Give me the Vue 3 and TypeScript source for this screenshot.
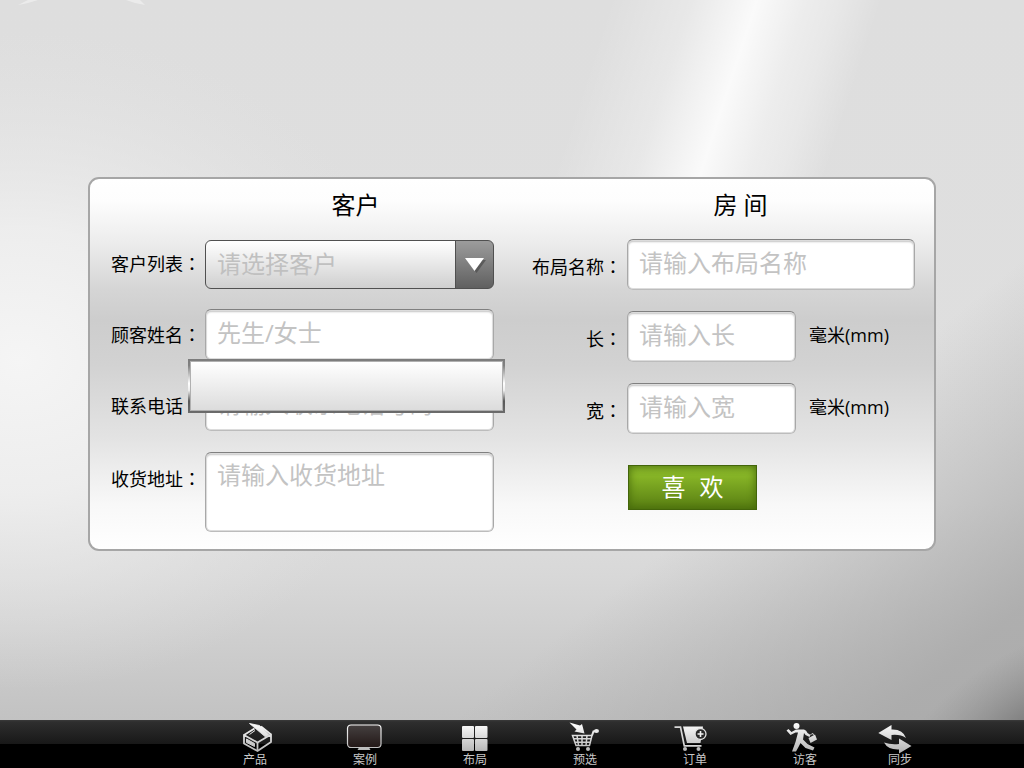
<script setup lang="ts">
import { ref } from 'vue'

interface NavItem {
  id: string
  label: string
}

const navItems: NavItem[] = [
  { id: 'product', label: '产品' },
  { id: 'case', label: '案例' },
  { id: 'layout', label: '布局' },
  { id: 'preselect', label: '预选' },
  { id: 'order', label: '订单' },
  { id: 'visitor', label: '访客' },
  { id: 'sync', label: '同步' },
]

const customer = ref('')
const name = ref('')
const phone = ref('')
const address = ref('')
const layoutName = ref('')
const roomLength = ref('')
const roomWidth = ref('')
</script>

<template>
  <div class="page">
    <svg class="backdrop" viewBox="0 0 1024 720" preserveAspectRatio="none" aria-hidden="true">
      <defs>
        <linearGradient id="bg-base" x1="0" y1="0" x2="0" y2="1">
          <stop offset="0" stop-color="#dedede" />
          <stop offset="0.7" stop-color="#dfdfdf" />
          <stop offset="0.8" stop-color="#d8d8d8" />
          <stop offset="1" stop-color="#c2c2c2" />
        </linearGradient>
        <radialGradient id="bg-left" gradientUnits="userSpaceOnUse" cx="0" cy="0" r="1" gradientTransform="translate(20 360) scale(400 330)">
          <stop offset="0" stop-color="#f5f5f5" />
          <stop offset="0.4" stop-color="#f1f1f1" stop-opacity="0.8" />
          <stop offset="1" stop-color="#e4e4e4" stop-opacity="0" />
        </radialGradient>
        <linearGradient id="bg-streak" gradientUnits="userSpaceOnUse" x1="624" y1="-43" x2="870" y2="37">
          <stop offset="0" stop-color="#fff" stop-opacity="0" />
          <stop offset="0.3" stop-color="#fff" stop-opacity="0.3" />
          <stop offset="0.54" stop-color="#fff" stop-opacity="0.85" />
          <stop offset="0.72" stop-color="#fff" stop-opacity="0.45" />
          <stop offset="0.84" stop-color="#fff" stop-opacity="0.3" />
          <stop offset="1" stop-color="#fff" stop-opacity="0" />
        </linearGradient>
        <linearGradient id="bg-shade" gradientUnits="userSpaceOnUse" x1="800" y1="440" x2="970" y2="650">
          <stop offset="0" stop-color="#aaa" stop-opacity="0" />
          <stop offset="1" stop-color="#a8a8a8" stop-opacity="0.85" />
        </linearGradient>
        <radialGradient id="bg-corner" gradientUnits="userSpaceOnUse" cx="0" cy="0" r="1" gradientTransform="translate(1034 730) rotate(-32) scale(170 80)">
          <stop offset="0" stop-color="#747474" />
          <stop offset="1" stop-color="#8c8c8c" stop-opacity="0" />
        </radialGradient>
      </defs>
      <rect width="1024" height="720" fill="url(#bg-base)" />
      <rect width="1024" height="720" fill="url(#bg-left)" />
      <rect width="1024" height="300" fill="url(#bg-streak)" />
      <rect width="1024" height="720" fill="url(#bg-shade)" />
      <rect width="1024" height="720" fill="url(#bg-corner)" />
      <path d="M18 5 Q26 4 38 0 H28 Z M126 0 Q136 4 145 5 L140 0 Z" fill="#fff" opacity="0.4" />
    </svg>

    <main class="content">
      <form class="panel" @submit.prevent>
        <section class="column column-customer">
          <h2 class="heading">客户</h2>
          <div class="row">
            <label class="label" for="customer">客户列表<span class="colon">：</span></label>
            <div class="field picker">
              <select id="customer" v-model="customer" class="select">
                <option value="">请选择客户</option>
              </select>
              <svg class="picker-arrow" viewBox="0 0 22 16" aria-hidden="true">
                <path d="M3 3 H22 L12.500 16 Z" fill="#4c4c4c" opacity="0.7" />
                <path d="M1 1 H20 L10.500 14 Z" fill="#fff" />
              </svg>
            </div>
          </div>
          <div class="row">
            <label class="label" for="name">顾客姓名<span class="colon">：</span></label>
            <div class="field">
              <input id="name" v-model="name" class="input" type="text" placeholder="先生/女士" />
              <div class="popup" role="listbox" aria-label="客户列表">
                <div class="popup-body"></div>
              </div>
            </div>
          </div>
          <div class="row">
            <label class="label" for="phone">联系电话<span class="colon">：</span></label>
            <div class="field">
              <input id="phone" v-model="phone" class="input" type="tel" placeholder="请输入联系电话号码" />
            </div>
          </div>
          <div class="row row-top">
            <label class="label" for="address">收货地址<span class="colon">：</span></label>
            <div class="field">
              <textarea id="address" v-model="address" class="input textarea" placeholder="请输入收货地址"></textarea>
            </div>
          </div>
        </section>

        <section class="column column-room">
          <h2 class="heading">房 间</h2>
          <div class="row">
            <label class="label" for="layout-name">布局名称<span class="colon">：</span></label>
            <div class="field">
              <input id="layout-name" v-model="layoutName" class="input" type="text" placeholder="请输入布局名称" />
            </div>
          </div>
          <div class="row">
            <label class="label" for="room-length">长<span class="colon">：</span></label>
            <div class="field measure">
              <input id="room-length" v-model="roomLength" class="input short" type="text" placeholder="请输入长" />
              <span class="unit">毫米(mm)</span>
            </div>
          </div>
          <div class="row">
            <label class="label" for="room-width">宽<span class="colon">：</span></label>
            <div class="field measure">
              <input id="room-width" v-model="roomWidth" class="input short" type="text" placeholder="请输入宽" />
              <span class="unit">毫米(mm)</span>
            </div>
          </div>
          <div class="actions">
            <button class="like" type="submit"><span>喜</span><span>欢</span></button>
          </div>
        </section>
      </form>
    </main>

    <nav class="toolbar">
      <svg class="defs" width="0" height="0" aria-hidden="true">
        <defs>
          <linearGradient id="metal" gradientUnits="userSpaceOnUse" x1="0" y1="2" x2="0" y2="31">
            <stop offset="0" stop-color="#fff" />
            <stop offset="1" stop-color="#b4b4b4" />
          </linearGradient>
          <linearGradient id="screen" x1="0" y1="0" x2="0" y2="1">
            <stop offset="0" stop-color="#454040" />
            <stop offset="1" stop-color="#231817" />
          </linearGradient>
        </defs>
      </svg>
      <a v-for="item in navItems" :key="item.id" class="nav-item" :class="'nav-' + item.id" :href="'#' + item.id">
        <svg class="icon" viewBox="0 0 36 32" aria-hidden="true">
          <g v-if="item.id === 'product'" fill="none" stroke="url(#metal)" stroke-linejoin="round">
            <path d="M7 14 L20.500 21.500 L34 13.500 V21 L20.500 30 L7 22.500 Z" stroke-width="1.800" />
            <path d="M20.500 21.500 V30 M7 14 L17.500 7.500 M24 5.500 L34 13.500" stroke-width="1.800" />
            <path d="M12.500 2.500 L22.500 4.500 L32 13.500 L28.500 16 L18 7 Z" fill="url(#metal)" stroke-width="0.800" />
            <path d="M9.500 18 L17.500 22.500 V25.500 L9.500 21.500 Z" fill="url(#metal)" stroke-width="1" />
            <path d="M12.500 13.500 L18 9.500" stroke-width="1" />
          </g>
          <g v-else-if="item.id === 'case'">
            <rect x="0.500" y="4" width="33.500" height="22.500" rx="3.500" fill="url(#screen)" stroke="url(#metal)" stroke-width="1.200" />
            <path d="M12 26.500 H22 L23.500 29 H10.500 Z" fill="url(#metal)" />
          </g>
          <g v-else-if="item.id === 'layout'" fill="url(#metal)">
            <rect x="5" y="5" width="12" height="12" rx="1" />
            <rect x="18" y="5" width="12.500" height="12" rx="1" />
            <rect x="5" y="18" width="12" height="12" rx="1" />
            <rect x="18" y="18" width="12.500" height="12" rx="1" />
          </g>
          <g v-else-if="item.id === 'preselect'">
            <path d="M2.500 1.500 L13 4.500 L15 3 L17.500 12.500 L7.500 10.500 L9.500 8.500 Z" fill="url(#metal)" />
            <g fill="none" stroke="url(#metal)" stroke-width="1.500">
              <path d="M5.500 14.500 H25 L22.500 24.500 H9 Z M6.500 17.800 H24 M7.500 21.200 H23.500 M10 14.500 L11.500 24.500 M15 14.500 V24.500 M20 14.500 L19 24.500" />
              <path d="M25 14.500 L26.500 10.500 L30 10" stroke-width="2" />
            </g>
            <ellipse cx="29.500" cy="10" rx="2.500" ry="2" fill="url(#metal)" />
            <circle cx="11" cy="28" r="2" fill="url(#metal)" />
            <circle cx="21" cy="28" r="2" fill="url(#metal)" />
          </g>
          <g v-else-if="item.id === 'order'">
            <path d="M6 5.500 H26 L23.500 22 H10 Z" fill="url(#metal)" />
            <path d="M-2.500 6.200 H3.500 L7.300 24.800 H24.500" fill="none" stroke="#d8d8d8" stroke-width="1.700" />
            <circle cx="23.500" cy="13" r="5.500" fill="#292929" stroke="#e2e2e2" stroke-width="1.300" />
            <path d="M20.500 13 H26.500 M23.500 10 V16" stroke="#f2f2f2" stroke-width="1.600" />
            <circle cx="8" cy="28" r="2" fill="url(#metal)" />
            <circle cx="21.500" cy="28" r="2" fill="url(#metal)" />
          </g>
          <g v-else-if="item.id === 'visitor'">
            <circle cx="9.500" cy="5" r="3" fill="url(#metal)" />
            <path d="M9 8.500 L17 8.500 Q19.500 9 20.500 12 L23.500 14 L22.500 16 L18.500 14 L17 12 L16 18.500 L20.500 23 L27.500 26.500 L26 29.500 L18.500 27 L13.500 22 L11.500 26 L9 30.500 L5 30.500 L8.500 21 L11 11.500 L8.500 11.500 L3.500 14 L-0.500 9.500 L1.500 8 L4.500 11 Z" fill="url(#metal)" />
            <path d="M21.500 17 L28 13.500 L30 18.500 L23.500 22 Z" fill="url(#metal)" />
            <path d="M23.500 14 L25 12.500 L27 13.500" fill="none" stroke="#ddd" />
          </g>
          <g v-else fill="url(#metal)">
            <path d="M-3.700 12 L9.500 4 V8.500 Q21 8 24 17 Q18 13 9.500 14 V19 Z" />
            <path d="M29.500 25 L17 32.500 V28.500 Q6 29 2 21.500 Q9 24 17 23 V17.500 Z" />
          </g>
        </svg>
        <span class="nav-label">{{ item.label }}</span>
      </a>
    </nav>
  </div>
</template>

<style>
html,
body {
  background: #dedede;
}
</style>

<style scoped>
.page {
  position: relative;
  display: flex;
  flex-direction: column;
  min-height: 100vh;
  font-family: "Open Sans", "Noto Sans CJK SC", sans-serif;
  color: #000;
}

.backdrop {
  position: absolute;
  inset: 0 0 48px;
  width: 100%;
  height: calc(100% - 48px);
}

.content {
  position: relative;
  flex: 1;
  display: flex;
  align-items: center;
  padding: 8px 88px 0;
}

.panel {
  box-sizing: border-box;
  flex: 1;
  display: grid;
  grid-template-columns: 1fr 1fr;
  gap: 38px;
  padding: 8px 19px 17px 21px;
  border: 2px solid #a6a6a6;
  border-radius: 11px;
  background: linear-gradient(#fff 0%, #fdfdfd 6%, #ebebeb 18%, #d5d5d5 30%, #cdcdcd 38%, #d2d2d2 50%, #e3e3e3 70%, #f8f8f8 88%, #fff 100%);
}

.column {
  display: flex;
  flex-direction: column;
}

.column-customer {
  gap: 20px;
}

.column-room {
  gap: 21px;
}

.heading {
  margin: 0;
  height: 31px;
  line-height: 36px;
  font-size: 24px;
  font-weight: 400;
  text-align: center;
}

.column-customer .heading {
  padding-left: 106px;
}

.column-room .heading {
  padding-left: 34px;
}

.row {
  display: grid;
  grid-template-columns: 94px 1fr;
  align-items: center;
  min-height: 51px;
}

.column-room .row {
  grid-template-columns: 95px 1fr;
}

.row-top {
  align-items: start;
  padding-top: 1px;
}

.label {
  font-size: 18px;
  line-height: 24px;
  white-space: nowrap;
}

.column-room .label {
  padding: 4px 5px 0 0;
  text-align: right;
}

.row-top .label {
  padding-top: 14px;
}

.colon {
  font-family: "Noto Sans CJK TC", sans-serif;
}

.field {
  position: relative;
  display: flex;
  align-items: center;
  min-width: 0;
}

.input {
  box-sizing: border-box;
  width: 100%;
  min-width: 0;
  height: 51px;
  margin: 0;
  padding: 0 11px 4px;
  border: 1px solid #a8a8a8;
  border-top-color: #808080;
  border-bottom-color: #bcbcbc;
  border-radius: 6px;
  background: #fff;
  box-shadow: inset 0 0 0 1px #dcdcdc, inset 0 2px 2px #c4c4c4;
  color: #333;
  font-family: inherit;
  font-size: 24px;
  outline: none;
}

.input::placeholder {
  color: #c3c3c3;
  opacity: 1;
}

.textarea {
  height: 80px;
  padding: 4px 11px;
  line-height: 36px;
  resize: none;
}

.short {
  flex: 0 1 169px;
}

.measure {
  gap: 13px;
}

.unit {
  font-size: 18px;
  line-height: 24px;
  padding-bottom: 3px;
  white-space: nowrap;
}

.picker {
  align-self: end;
}

.select {
  box-sizing: border-box;
  width: 100%;
  height: 49px;
  margin: 0;
  padding: 0 50px 3px 11px;
  appearance: none;
  border: 1px solid #505050;
  border-radius: 6px;
  background:
    linear-gradient(#505050, #505050) right 37px top / 1px 100% no-repeat,
    linear-gradient(#9c9c9c, #606060) right top / 37px 100% no-repeat,
    linear-gradient(#fff, #cfcfcf);
  color: #c0c0c0;
  font-family: inherit;
  font-size: 24px;
  outline: none;
}

.picker-arrow {
  position: absolute;
  right: 8px;
  top: 17px;
  width: 22px;
  height: 16px;
  pointer-events: none;
}

.popup {
  position: absolute;
  z-index: 2;
  top: 50px;
  left: -17px;
  right: -11px;
  display: flex;
  height: 54px;
  box-sizing: border-box;
  padding: 2px;
  background: linear-gradient(#7c7c7c 0%, #808080 12%, #fff 45%, #eee 58%, #585858 78%, #6c6c6c 100%);
}

.popup-body {
  flex: 1;
  border: 1px solid #b0b0b0;
  background: linear-gradient(#fff, #dcdcdc);
}

.actions {
  display: flex;
  padding: 10px 0 0 96px;
}

.like {
  display: flex;
  align-items: center;
  justify-content: center;
  gap: 14px;
  box-sizing: border-box;
  width: 129px;
  height: 45px;
  margin: 0;
  padding: 0 0 4px;
  border: 1px solid #43650a;
  border-radius: 0;
  background: linear-gradient(#87b42a 0%, #86b326 25%, #577d12 100%);
  box-shadow: inset 0 0 8px #45690a;
  color: #fff;
  font-family: inherit;
  font-size: 24px;
}

.toolbar {
  position: relative;
  box-sizing: border-box;
  display: flex;
  justify-content: center;
  height: 48px;
  padding-left: 116px;
  background: linear-gradient(#3a3a3a 0, #2e2e2e 2px, #181818 24px, #000 24px);
}

.defs {
  position: absolute;
}

.nav-item {
  display: flex;
  flex-direction: column;
  align-items: center;
  width: 110px;
  padding-top: 1px;
  color: #c8c8c8;
  text-decoration: none;
}

.nav-sync {
  width: 80px;
}

.icon {
  width: 36px;
  height: 32px;
  overflow: visible;
}

.nav-label {
  font-size: 12px;
  line-height: 14px;
}
</style>
